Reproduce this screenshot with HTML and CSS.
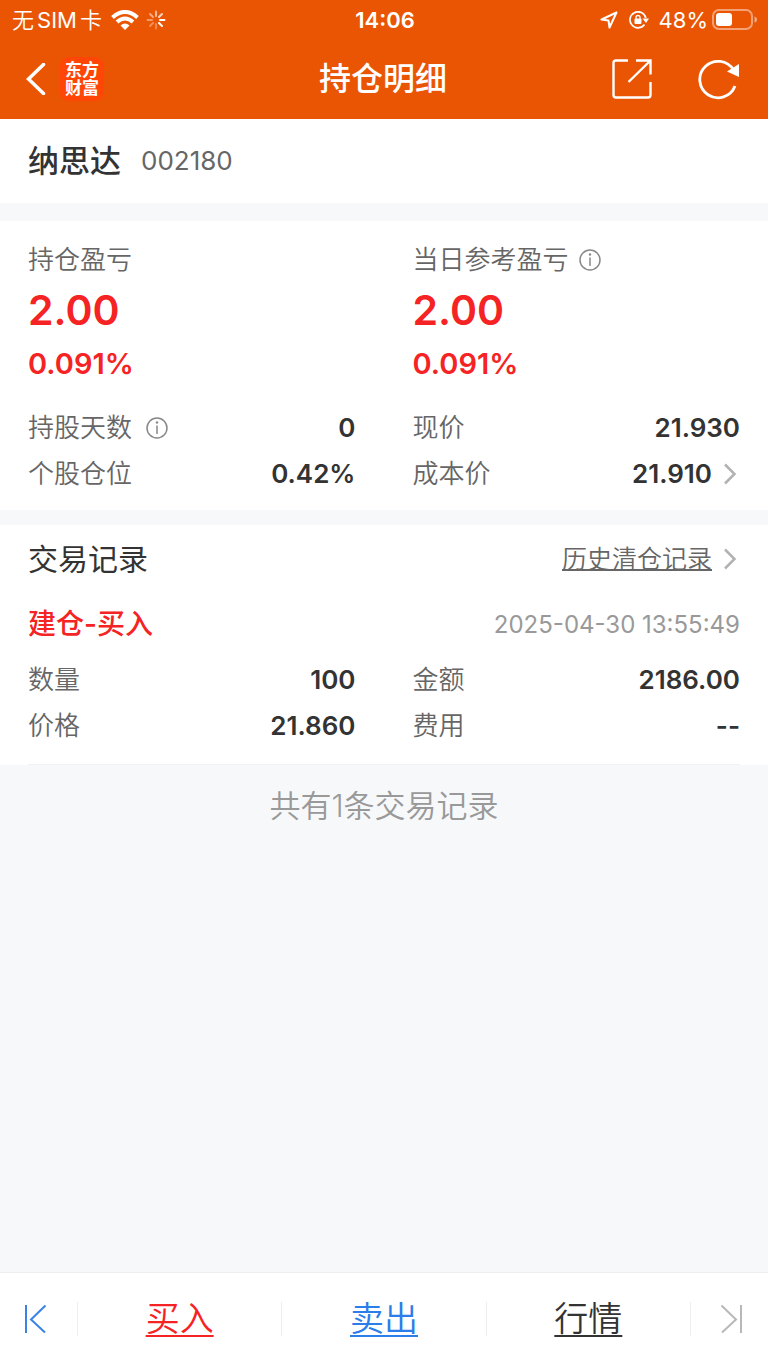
FILE: index.html
```html
<!DOCTYPE html>
<html lang="zh-CN">
<head>
<meta charset="utf-8">
<meta name="viewport" content="width=device-width, initial-scale=1">
<title>持仓明细</title>
<link rel="stylesheet" href="styles.css">
</head>
<body>
<div class="app">
  <header class="top">
    <div class="status">
      <div class="status-side">
        <span class="carrier">无<span class="sim">SIM</span>卡</span>
        <svg class="wifi" width="28" height="20" viewBox="0 0 28 20" fill="none" stroke="#fff" stroke-width="4">
          <path d="M1.500 7.500Q14-3.500 26.500 7.500"/>
          <path d="M6 12Q14 5 22 12"/>
          <path d="M9.500 15.500Q14 11.500 18.500 15.500L14 20Z" fill="#fff" stroke="none"/>
        </svg>
        <svg class="spinner" width="20" height="20" viewBox="0 0 20 20" fill="none" stroke="#fff" stroke-width="2" stroke-linecap="round">
          <path d="M10 1.500V6" opacity=".6"/>
          <path d="M16 4L13 7" opacity=".75"/>
          <path d="M18.500 10H14"/>
          <path d="M16 16L13 13"/>
          <path d="M10 18.500V14" opacity=".3"/>
          <path d="M4 16L7 13" opacity=".35"/>
          <path d="M1.500 10H6" opacity=".4"/>
          <path d="M4 4L7 7" opacity=".5"/>
        </svg>
      </div>
      <time class="clock">14:06</time>
      <div class="status-side status-end">
        <svg width="18" height="18" viewBox="0 0 18 18" fill="none" stroke="#fff" stroke-width="2" stroke-linejoin="round"><path d="M16.500 1.500L1.500 8.500L8.500 9.500L9.500 16.500Z"/></svg>
        <svg class="lock" width="20" height="18" viewBox="0 0 20 18" fill="none" stroke="#fff" stroke-width="1.700">
          <path d="M16.800 7A8 8 0 1 0 15.500 13.500"/>
          <path d="M13.500 7.500H20L17 12Z" fill="#fff" stroke="none"/>
          <rect x="5.500" y="7.500" width="7" height="5.500" rx="1" fill="#fff" stroke="none"/>
          <path d="M7 8V6.500A2 2 0 0 1 11 6.500V8" stroke-width="1.300"/>
        </svg>
        <span class="percent">48%</span>
        <svg width="46" height="22" viewBox="0 0 46 22" fill="none">
          <rect x="1" y="1" width="39" height="19" rx="6" stroke="#fff" stroke-opacity=".45" stroke-width="2"/>
          <rect x="4" y="4" width="16" height="13" rx="3" fill="#fff"/>
          <path d="M42.500 7.500Q45 8 45 10.500T42.500 13.500Z" fill="#fff" fill-opacity=".5"/>
        </svg>
      </div>
    </div>
    <nav class="nav">
      <div class="nav-side">
        <button class="icon-btn" aria-label="返回"><svg width="20" height="32" viewBox="0 0 20 32" fill="none" stroke="#fff" stroke-width="3.500" stroke-linecap="round" stroke-linejoin="miter"><path d="M17.500 1.500L2.500 16L17.500 30.500"/></svg></button>
        <span class="logo"><span>东方</span><span>财富</span></span>
      </div>
      <h1 class="title">持仓明细</h1>
      <div class="nav-side nav-end">
        <button class="icon-btn" aria-label="分享"><svg width="40" height="40" viewBox="0 0 40 40" fill="none" stroke="#fff" stroke-width="2.400"><path d="M16 1.500H4Q1.500 1.500 1.500 4V36Q1.500 38.500 4 38.500H36Q38.500 38.500 38.500 36V23M24 1.500H38.500V15.500M38.500 1.500L16.500 23"/></svg></button>
        <button class="icon-btn" aria-label="刷新"><svg width="42" height="42" viewBox="0 0 42 42" fill="none" stroke="#fff" stroke-width="2.800"><path d="M37 28A18.200 18.200 0 1 1 35.500 12"/><path d="M29 13.500L41 6V19Z" fill="#fff" stroke="none"/></svg></button>
      </div>
    </nav>
  </header>

  <main class="content">
    <section class="card stock">
      <h2 class="stock-name">纳思达</h2>
      <span class="stock-code">002180</span>
    </section>

    <section class="card summary">
      <div class="columns">
        <div class="profit">
          <div class="label">持仓盈亏</div>
          <div class="amount">2.00</div>
          <div class="rate">0.091%</div>
        </div>
        <div class="profit">
          <div class="label label-tip">当日参考盈亏
            <button class="icon-btn" aria-label="说明"><svg width="22" height="22" viewBox="0 0 22 22" fill="none" stroke="#888" stroke-width="1.500"><circle cx="11" cy="11" r="10"/><path d="M11 8.500V17"/><circle cx="11" cy="5.500" r="1.200" fill="#888" stroke="none"/></svg></button>
          </div>
          <div class="amount">2.00</div>
          <div class="rate">0.091%</div>
        </div>
      </div>
      <dl class="columns facts">
        <div class="fact"><dt class="tip-wide">持股天数
          <button class="icon-btn" aria-label="说明"><svg width="22" height="22" viewBox="0 0 22 22" fill="none" stroke="#888" stroke-width="1.500"><circle cx="11" cy="11" r="10"/><path d="M11 8.500V17"/><circle cx="11" cy="5.500" r="1.200" fill="#888" stroke="none"/></svg></button></dt><dd>0</dd></div>
        <div class="fact"><dt>现价</dt><dd>21.930</dd></div>
        <div class="fact"><dt>个股仓位</dt><dd>0.42%</dd></div>
        <div class="fact"><dt>成本价</dt><dd class="more">21.910<svg width="16" height="22" viewBox="0 0 16 22" fill="none" stroke="#b2b2b2" stroke-width="2.500"><path d="M1 1.500L10.500 11L1 20.500"/></svg></dd></div>
      </dl>
    </section>

    <section class="card records">
      <div class="records-head">
        <h2 class="records-title">交易记录</h2>
        <a class="history more" href="#history"><span class="history-text">历史清仓记录</span><svg width="16" height="22" viewBox="0 0 16 22" fill="none" stroke="#b2b2b2" stroke-width="2.500"><path d="M1 1.500L10.500 11L1 20.500"/></svg></a>
      </div>
      <article class="record">
        <div class="record-head">
          <h3 class="record-type">建仓-买入</h3>
          <time class="record-time">2025-04-30 13:55:49</time>
        </div>
        <dl class="columns facts">
          <div class="fact"><dt>数量</dt><dd>100</dd></div>
          <div class="fact"><dt>金额</dt><dd>2186.00</dd></div>
          <div class="fact"><dt>价格</dt><dd>21.860</dd></div>
          <div class="fact"><dt>费用</dt><dd>--</dd></div>
        </dl>
      </article>
    </section>
    <p class="total">共有1条交易记录</p>
  </main>

  <footer class="bottom">
    <button class="icon-btn step step-prev" aria-label="上一只"><svg width="24" height="30" viewBox="0 0 24 30" fill="none" stroke="#3a82e4" stroke-width="2"><path d="M2 1V29M21.500 1.500L7 15.500L21 28.500"/></svg></button>
    <a class="action buy" href="#buy">买入</a>
    <a class="action sell" href="#sell">卖出</a>
    <a class="action quote" href="#quote">行情</a>
    <button class="icon-btn step step-next" aria-label="下一只"><svg width="24" height="30" viewBox="0 0 24 30" fill="none" stroke="#b8b8b8" stroke-width="2"><path d="M22 1V29M2.500 1.500L17 15.500L3 28.500"/></svg></button>
  </footer>
</div>
</body>
</html>
```

FILE: styles.css
```css
* {
  box-sizing: border-box;
}

body,
h1,
h2,
h3,
p,
dl,
dd {
  margin: 0;
}

body {
  background: #f7f8fa;
  color: #333;
  font-family: Inter, "Noto Sans CJK SC", sans-serif;
  font-size: 26px;
}

svg {
  display: block;
  flex: none;
}

.app {
  display: flex;
  flex-direction: column;
  min-height: 100vh;
}

.icon-btn {
  display: flex;
  align-items: center;
  justify-content: center;
  padding: 0;
  border: 0;
  background: none;
}

/* Header */
.top {
  background: #ea5504;
  color: #fff;
}

.status {
  display: grid;
  grid-template-columns: 1fr auto 1fr;
  align-items: center;
  height: 39px;
  padding: 0 10px 0 12px;
  font-size: 22px;
}

.status-side {
  display: flex;
  align-items: center;
}

.status-end {
  justify-content: flex-end;
}

.carrier {
  display: flex;
  align-items: center;
  gap: 3px;
  font-weight: 350;
  line-height: 24px;
}

.sim {
  font-weight: 400;
}

.wifi {
  margin-left: 9px;
}

.spinner {
  margin-left: 7px;
}

.clock {
  font-weight: 600;
}

.lock {
  margin-left: 11px;
}

.percent {
  margin: 0 4px 0 10px;
}

.nav {
  display: grid;
  grid-template-columns: 1fr auto 1fr;
  align-items: center;
  height: 80px;
  padding: 0 28px 0 26px;
}

.nav-side {
  display: flex;
  align-items: center;
  gap: 14px;
}

.nav-end {
  justify-content: flex-end;
  gap: 46px;
}

.logo {
  display: flex;
  flex-direction: column;
  align-items: center;
  justify-content: center;
  width: 44px;
  height: 44px;
  border-radius: 9px;
  background: #ff4606;
  font-size: 17px;
  font-weight: 700;
  line-height: 18px;
}

.title {
  font-size: 32px;
  font-weight: 500;
  line-height: 48px;
}

/* Cards */
.content {
  flex: 1;
}

.card {
  padding: 0 28px;
  background: #fff;
}

.stock {
  display: flex;
  align-items: center;
  gap: 20px;
  height: 84px;
}

.stock-name {
  font-size: 31px;
  font-weight: 500;
  line-height: 48px;
}

.stock-code {
  color: #666;
  line-height: 40px;
}

.summary {
  margin-top: 18px;
  padding-top: 21px;
  padding-bottom: 13px;
}

.columns {
  display: grid;
  grid-template-columns: 1fr 1fr;
  column-gap: 57px;
}

.label,
.fact dt {
  display: flex;
  align-items: center;
  gap: 10px;
  color: #666;
  font-weight: 350;
}

.label {
  line-height: 36px;
}

.fact .tip-wide {
  gap: 14px;
}

.amount,
.rate {
  color: #f52323;
  font-weight: 600;
}

.amount {
  margin: 4px 0 6px;
  font-size: 41px;
  line-height: 56px;
}

.rate {
  font-size: 29px;
  line-height: 40px;
}

.facts {
  font-size: 26px;
  line-height: 46px;
}

.summary .facts {
  margin-top: 21px;
}

.fact {
  display: flex;
  justify-content: space-between;
}

.fact dd {
  font-weight: 600;
}

.more {
  display: flex;
  align-items: center;
  gap: 12px;
}

.records {
  margin-top: 15px;
}

.records-head,
.record-head {
  display: flex;
  align-items: center;
  justify-content: space-between;
}

.records-head {
  height: 68px;
}

.records-title {
  font-size: 30px;
  font-weight: 400;
  line-height: 40px;
}

.history {
  color: #666;
  font-size: 25px;
  font-weight: 350;
  line-height: 36px;
  text-decoration: none;
}

.history-text {
  text-decoration: underline;
  text-decoration-thickness: 2px;
}

.record {
  padding-bottom: 15px;
  border-bottom: 1px solid #f1f3f3;
}

.record-head {
  height: 64px;
  padding-bottom: 2px;
}

.record-type {
  color: #f52323;
  font-size: 28px;
  font-weight: 500;
  line-height: 36px;
}

.record-time {
  color: #999;
  font-size: 24px;
}

.total {
  padding: 19px 28px;
  color: #999;
  font-size: 31px;
  font-weight: 350;
  line-height: 44px;
  text-align: center;
}

/* Bottom bar */
.bottom {
  display: flex;
  align-items: center;
  height: 94px;
  padding-bottom: 2px;
  border-top: 1px solid #eee;
  background: #fff;
}

.step {
  flex: none;
  width: 77px;
  height: 32px;
}

.step-prev {
  padding-right: 5px;
}

.step-next {
  padding-left: 4px;
}

.action {
  flex: 1;
  border-left: 1px solid #eee;
  font-size: 34px;
  font-weight: 350;
  line-height: 34px;
  text-align: center;
  text-decoration-thickness: 2px;
  text-underline-offset: 4px;
}

.quote {
  border-right: 1px solid #eee;
}

.buy {
  color: #f52323;
}

.sell {
  color: #2b7de9;
}

.quote {
  color: #333;
}
```
